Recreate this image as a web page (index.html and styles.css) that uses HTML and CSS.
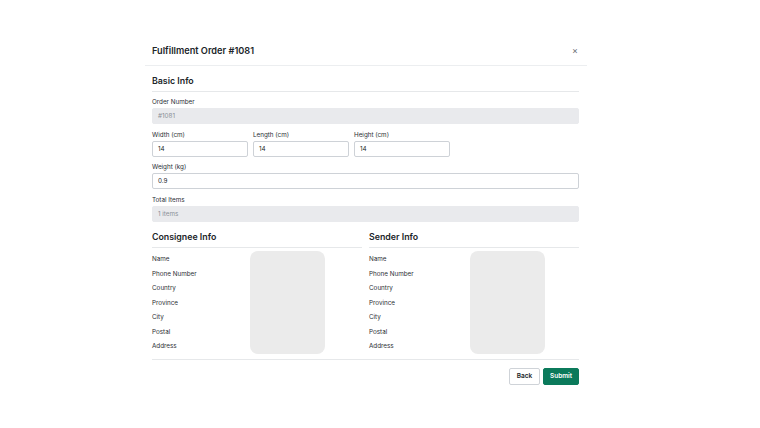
FILE: index.html
```html
<!DOCTYPE html>
<html lang="en">
<head>
<meta charset="utf-8">
<title>Fulfillment Order #1081</title>
<link rel="stylesheet" href="styles.css">
</head>
<body>
<div class="modal">
  <div class="modal-header">
    <h1 class="modal-title">Fulfillment Order #1081</h1>
    <button class="close" type="button">&times;</button>
  </div>
  <div class="modal-body">
    <h2 class="section-title">Basic Info</h2>
    <div class="field">
      <label class="label">Order Number</label>
      <div class="input input-disabled">#1081</div>
    </div>
    <div class="dims">
      <div class="field dim">
        <label class="label">Width (cm)</label>
        <div class="input">14</div>
      </div>
      <div class="field dim">
        <label class="label">Length (cm)</label>
        <div class="input">14</div>
      </div>
      <div class="field dim">
        <label class="label">Height (cm)</label>
        <div class="input">14</div>
      </div>
    </div>
    <div class="field">
      <label class="label">Weight (kg)</label>
      <div class="input">0.9</div>
    </div>
    <div class="field">
      <label class="label">Total Items</label>
      <div class="input input-disabled">1 items</div>
    </div>

    <div class="parties">
      <div class="party">
        <h2 class="section-title party-title">Consignee Info</h2>
        <div class="party-body">
          <ul class="party-labels">
            <li>Name</li>
            <li>Phone Number</li>
            <li>Country</li>
            <li>Province</li>
            <li>City</li>
            <li>Postal</li>
            <li>Address</li>
          </ul>
          <div class="redact"></div>
        </div>
      </div>
      <div class="party">
        <h2 class="section-title party-title">Sender Info</h2>
        <div class="party-body">
          <ul class="party-labels party-labels-wide">
            <li>Name</li>
            <li>Phone Number</li>
            <li>Country</li>
            <li>Province</li>
            <li>City</li>
            <li>Postal</li>
            <li>Address</li>
          </ul>
          <div class="redact"></div>
        </div>
      </div>
    </div>

    <div class="footer">
      <button class="btn btn-back" type="button">Back</button>
      <button class="btn btn-submit" type="button">Submit</button>
    </div>
  </div>
</div>
</body>
</html>
```

FILE: styles.css
```css
* { box-sizing: border-box; }
html, body {
  margin: 0;
  padding: 0;
  background: #ffffff;
}
body {
  font-family: Inter, "Liberation Sans", sans-serif;
  color: #212529;
  width: 760px;
  height: 428px;
  overflow: hidden;
}
.modal {
  margin: 35px 0 0 145px;
  width: 442px;
}
.modal-header {
  height: 31px;
  display: flex;
  align-items: center;
  justify-content: space-between;
  padding: 2px 9px 0 7px;
  border-bottom: 1px solid #eceef0;
}
.modal-title {
  margin: 0;
  font-size: 9.2px;
  font-weight: 600;
  line-height: 12px;
  color: #212529;
}
.close {
  border: 0;
  background: transparent;
  padding: 0;
  font-family: Inter, "Liberation Sans", sans-serif;
  font-size: 9px;
  line-height: 10px;
  color: #6b7075;
  cursor: pointer;
}
.modal-body {
  padding: 0 8px 0 7px;
}
.section-title {
  margin: 9px 0 0;
  font-size: 8.8px;
  font-weight: 600;
  line-height: 12px;
  padding-bottom: 4px;
  border-bottom: 1px solid #e6e8ea;
  color: #212529;
}
.field {
  display: flex;
  flex-direction: column;
  margin-top: 4.5px;
}
.section-title + .field { margin-top: 4px; }
.label {
  font-size: 6.3px;
  line-height: 10px;
  height: 10px;
  margin-bottom: 2px;
  color: #2a2e33;
  padding-top: 1px;
}
.input {
  height: 16px;
  border: 1px solid #ced2d7;
  border-radius: 2px;
  padding: 0 5px;
  font-size: 6.3px;
  line-height: 14px;
  color: #212529;
  background: #ffffff;
}
.input-disabled {
  background: #e9eaed;
  border-color: #e9eaed;
  color: #8a8f96;
}
.dims {
  display: flex;
  gap: 5.5px;
}
.dim { width: 95.5px; }
.parties {
  display: flex;
  gap: 7px;
  margin-top: 9px;
}
.party { flex: 1 1 0; }
.party-title {
  margin-top: 0;
  padding-top: 0;
  padding-bottom: 4.5px;
}
.party-body {
  display: flex;
  margin-top: 3px;
}
.party-labels {
  list-style: none;
  margin: 0;
  padding: 0;
  width: 98px;
}
.party-labels-wide { width: 101px; }
.party-labels li {
  font-size: 6.3px;
  line-height: 14.5px;
  height: 14.5px;
  color: #2a2e33;
  padding-top: 1px;
}
.redact {
  width: 74.5px;
  height: 103px;
  background: #ebebeb;
  border-radius: 8px;
}
.footer {
  border-top: 1px solid #e6e8ea;
  margin-top: 5px;
  padding-top: 8px;
  display: flex;
  justify-content: flex-end;
  gap: 3px;
}
.btn {
  height: 17px;
  border-radius: 2px;
  font-family: Inter, "Liberation Sans", sans-serif;
  font-size: 6.5px;
  font-weight: 600;
  line-height: 15px;
  padding: 0;
  cursor: pointer;
}
.btn-back {
  width: 31px;
  background: #ffffff;
  border: 1px solid #cfd3d8;
  color: #212529;
}
.btn-submit {
  width: 36px;
  background: #0b7a5b;
  border: 1px solid #0b7a5b;
  color: #ffffff;
}
```
